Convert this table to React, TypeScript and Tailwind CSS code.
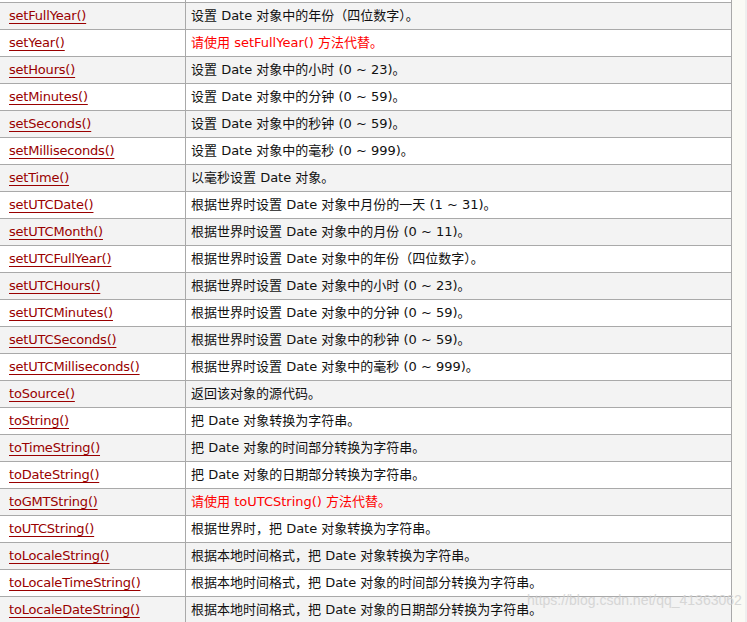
const rows: { name: string; desc: string; red?: boolean }[] = [
  { name: "setFullYear()", desc: "设置 Date 对象中的年份（四位数字）。" },
  { name: "setYear()", desc: "请使用 setFullYear() 方法代替。", red: true },
  { name: "setHours()", desc: "设置 Date 对象中的小时 (0 ~ 23)。" },
  { name: "setMinutes()", desc: "设置 Date 对象中的分钟 (0 ~ 59)。" },
  { name: "setSeconds()", desc: "设置 Date 对象中的秒钟 (0 ~ 59)。" },
  { name: "setMilliseconds()", desc: "设置 Date 对象中的毫秒 (0 ~ 999)。" },
  { name: "setTime()", desc: "以毫秒设置 Date 对象。" },
  { name: "setUTCDate()", desc: "根据世界时设置 Date 对象中月份的一天 (1 ~ 31)。" },
  { name: "setUTCMonth()", desc: "根据世界时设置 Date 对象中的月份 (0 ~ 11)。" },
  { name: "setUTCFullYear()", desc: "根据世界时设置 Date 对象中的年份（四位数字）。" },
  { name: "setUTCHours()", desc: "根据世界时设置 Date 对象中的小时 (0 ~ 23)。" },
  { name: "setUTCMinutes()", desc: "根据世界时设置 Date 对象中的分钟 (0 ~ 59)。" },
  { name: "setUTCSeconds()", desc: "根据世界时设置 Date 对象中的秒钟 (0 ~ 59)。" },
  { name: "setUTCMilliseconds()", desc: "根据世界时设置 Date 对象中的毫秒 (0 ~ 999)。" },
  { name: "toSource()", desc: "返回该对象的源代码。" },
  { name: "toString()", desc: "把 Date 对象转换为字符串。" },
  { name: "toTimeString()", desc: "把 Date 对象的时间部分转换为字符串。" },
  { name: "toDateString()", desc: "把 Date 对象的日期部分转换为字符串。" },
  { name: "toGMTString()", desc: "请使用 toUTCString() 方法代替。", red: true },
  { name: "toUTCString()", desc: "根据世界时，把 Date 对象转换为字符串。" },
  { name: "toLocaleString()", desc: "根据本地时间格式，把 Date 对象转换为字符串。" },
  { name: "toLocaleTimeString()", desc: "根据本地时间格式，把 Date 对象的时间部分转换为字符串。" },
  { name: "toLocaleDateString()", desc: "根据本地时间格式，把 Date 对象的日期部分转换为字符串。" },
];

export default function App() {
  return (
    <div
      className="relative flex h-[622px] w-[747px] overflow-hidden bg-white text-[13px] text-[#111]"
      style={{ fontFamily: '"DejaVu Sans", "Noto Sans CJK SC", sans-serif' }}
    >
      <div className="w-[732px] border-r border-[#a9a9a9]">
        {/* tail of the row above, cut off */}
        <div className="flex h-[2px]">
          <div className="w-[186px] border-r border-[#a9a9a9]" />
        </div>
        {rows.map((r, i) => (
          <div
            key={r.name}
            className={`flex h-[27px] items-center border-t border-[#a9a9a9] ${i % 2 === 0 ? "bg-[#f3f3f3]" : "bg-white"}`}
          >
            <div className="flex h-full w-[186px] shrink-0 items-center border-r border-[#a9a9a9] pl-[9px]">
              <a className="tracking-[-0.2px] text-[#900] underline decoration-[#900] underline-offset-[3px]">{r.name}</a>
            </div>
            <div className={`pl-[5px] ${r.red ? "text-[#f00]" : ""}`}>{r.desc}</div>
          </div>
        ))}
      </div>
      <div className="w-[13px] bg-[#fafaf5]" />
      <div className="flex-1 bg-[#efefef]" />

      {/* watermark */}
      <div
        className="pointer-events-none absolute left-[527px] top-[592px] text-[14px] leading-[16px] text-[#cfcfcf] opacity-80"
        style={{ fontFamily: '"Liberation Sans", sans-serif' }}
      >
        https://blog.csdn.net/qq_41363062
      </div>
    </div>
  );
}
